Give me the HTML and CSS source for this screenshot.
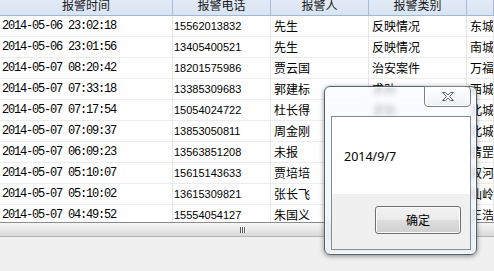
FILE: index.html
```html
<!DOCTYPE html>
<html lang="zh-CN">
<head>
<meta charset="utf-8">
<title>报警列表</title>
<link rel="stylesheet" href="styles.css">
</head>
<body>
<div class="window">
  <div class="grid">
    <div class="hd">报警时间</div><div class="hd">报警电话</div><div class="hd">报警人</div><div class="hd">报警类别</div><div class="hd"></div>

    <div class="c t">2014-05-06 23:02:18</div><div class="c p">15562013832</div><div class="c z">先生</div><div class="c z">反映情况</div><div class="c z">东城</div>
    <div class="c t">2014-05-06 23:01:56</div><div class="c p">13405400521</div><div class="c z">先生</div><div class="c z">反映情况</div><div class="c z">南城</div>
    <div class="c t">2014-05-07 08:20:42</div><div class="c p">18201575986</div><div class="c z">贾云国</div><div class="c z">治安案件</div><div class="c z">万福</div>
    <div class="c t">2014-05-07 07:33:18</div><div class="c p">13385309683</div><div class="c z">郭建标</div><div class="c z">求助</div><div class="c z">西城</div>
    <div class="c t">2014-05-07 07:17:54</div><div class="c p">15054024722</div><div class="c z">杜长得</div><div class="c z">求助</div><div class="c z">北城</div>
    <div class="c t">2014-05-07 07:09:37</div><div class="c p">13853050811</div><div class="c z">周金刚</div><div class="c z">求助</div><div class="c z">北城</div>
    <div class="c t">2014-05-07 06:09:23</div><div class="c p">13563851208</div><div class="c z">未报</div><div class="c z">求助</div><div class="c z">清罡</div>
    <div class="c t">2014-05-07 05:10:07</div><div class="c p">15615143633</div><div class="c z">贾培培</div><div class="c z">求助</div><div class="c z">双河</div>
    <div class="c t">2014-05-07 05:10:02</div><div class="c p">13615309821</div><div class="c z">张长飞</div><div class="c z">求助</div><div class="c z">仙岭</div>
    <div class="c t">2014-05-07 04:49:52</div><div class="c p">15554054127</div><div class="c z">朱国义</div><div class="c z">求助</div><div class="c z">王浩</div>
  </div>
  <div class="hscroll"><div class="grip"><i></i><i></i><i></i></div></div>
  <div class="footer"></div>

  <div class="dialog">
    <div class="close">
      <svg width="14" height="11" viewBox="0 0 14 11"><path d="M1.5 1.5h3l2.5 2.5 2.5-2.5h3l-4 4 4 4h-3l-2.5-2.5-2.5 2.5h-3l4-4z" fill="#fdfdfd" stroke="#5c5c5c" stroke-width="1" stroke-linejoin="round"/></svg>
    </div>
    <div class="client">
      <div class="msg">2014/9/7</div>
      <div class="actions"><button class="btn">确定</button></div>
    </div>
  </div>
</div>
</body>
</html>
```
FILE: styles.css
```css
html, body {
  margin: 0;
  padding: 0;
  background: #f0f0f0;
}
.window {
  position: relative;
  width: 494px;
  height: 271px;
  overflow: hidden;
  display: flex;
  flex-direction: column;
  background: #fff;
}
.grid {
  height: 222px;
  overflow: hidden;
  display: grid;
  grid-template-columns: 173px 98px 98px 98px 1fr;
  grid-auto-rows: 21px;
  grid-template-rows: 16px;
  background: #fff;
}
.hd {
  box-sizing: border-box;
  height: 16px;
  background: linear-gradient(#e2eaf6, #d9e4f3);
  border-right: 1px solid #a9bbd3;
  border-bottom: 1px solid #a3b7d1;
  font-family: "Noto Sans CJK SC", sans-serif;
  font-size: 12px;
  line-height: 10px;
  color: #1a1a1a;
  text-align: center;
  overflow: hidden;
  white-space: nowrap;
}
.c {
  box-sizing: border-box;
  height: 21px;
  border-right: 1px solid #e6e6e6;
  border-bottom: 1px solid #ececec;
  line-height: 20px;
  color: #000;
  white-space: nowrap;
  overflow: hidden;
}
.t {
  font-family: "Liberation Mono", monospace;
  font-size: 12px;
  letter-spacing: -1.2px;
  padding-left: 2px;
}
.p {
  font-family: "Liberation Sans", sans-serif;
  font-size: 11px;
  padding-left: 1px;
}
.z {
  font-family: "Noto Sans CJK SC", sans-serif;
  font-size: 12px;
  padding-left: 3px;
}
.hscroll {
  box-sizing: border-box;
  height: 15px;
  border-top: 1px solid #8c8c8c;
  border-bottom: 1px solid #b4b4b4;
  background: linear-gradient(#f6f6f6, #e9e9e9 50%, #d9d9d9);
  display: flex;
  align-items: center;
  justify-content: center;
  padding-right: 10px;
}
.grip {
  display: flex;
  gap: 1px;
  height: 6px;
}
.grip i {
  width: 1px;
  height: 6px;
  background: #5a5a5a;
  box-shadow: 1px 0 0 #fff;
}
.footer {
  flex: 1;
  background: #f0f0f0;
}
.dialog {
  position: absolute;
  left: 324px;
  top: 86px;
  width: 153px;
  height: 169px;
  box-sizing: border-box;
  border: 1px solid #56616b;
  border-radius: 6px;
  background: linear-gradient(rgba(250, 252, 254, 0.72), rgba(232, 242, 250, 0.72));
  backdrop-filter: blur(2.5px);
  box-shadow: 0 1px 5px rgba(0, 0, 0, 0.45), inset 0 0 0 1px rgba(255, 255, 255, 0.75);
  padding: 29px 5px 4px 6px;
  display: flex;
  flex-direction: column;
}
.close {
  position: absolute;
  right: 5px;
  top: -1px;
  width: 47px;
  height: 21px;
  box-sizing: border-box;
  border: 1px solid #7d8186;
  border-radius: 0 4px 4px 4px;
  background: linear-gradient(rgba(255, 255, 255, 0.7), rgba(236, 240, 244, 0.8));
  box-shadow: inset 0 0 0 1px rgba(255, 255, 255, 0.8);
  display: flex;
  align-items: center;
  justify-content: center;
}
.close svg {
  display: block;
}
.client {
  flex: 1;
  border: 1px solid #858b91;
  background: #f0f0f0;
  display: flex;
  flex-direction: column;
}
.msg {
  height: 76px;
  background: #fff;
  padding-left: 12px;
  display: flex;
  align-items: center;
  padding-top: 1px;
  font-family: "Noto Sans", sans-serif;
  font-size: 12.5px;
  color: #000;
}
.actions {
  flex: 1;
  display: flex;
  justify-content: flex-end;
  align-items: flex-start;
  padding: 12px 9px 0 0;
}
.btn {
  width: 86px;
  height: 28px;
  box-sizing: border-box;
  border: 1px solid #707070;
  border-radius: 3px;
  background: linear-gradient(#f2f2f2 0%, #ebebeb 48%, #dddddd 52%, #cfcfcf 100%);
  box-shadow: inset 0 0 0 1px #fbfbfb;
  font-family: "Noto Sans CJK SC", sans-serif;
  font-size: 12px;
  color: #000;
  padding: 0;
  line-height: 24px;
}
```
